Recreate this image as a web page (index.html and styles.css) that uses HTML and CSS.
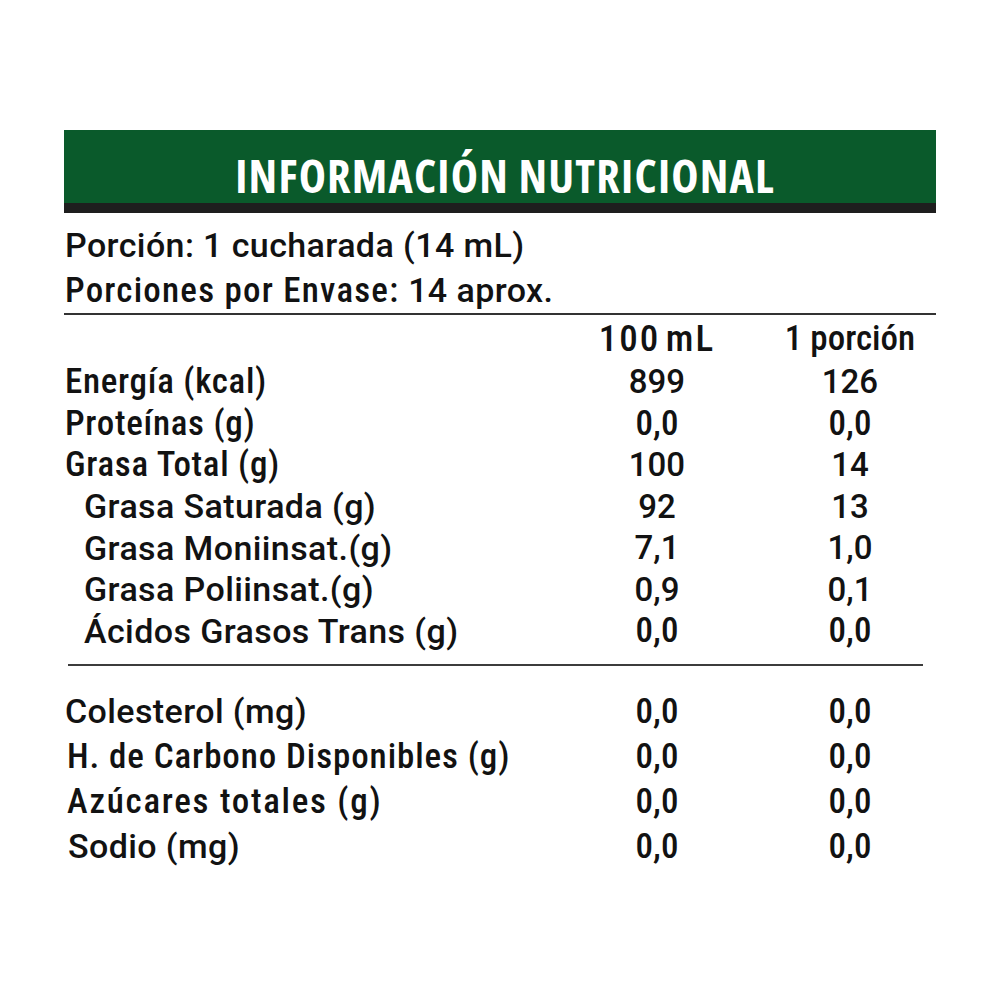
FILE: index.html
```html
<!DOCTYPE html>
<html lang="es">
<head>
<meta charset="utf-8">
<title>Información Nutricional</title>
<link rel="stylesheet" href="styles.css">
</head>
<body>
<div class="label">
  <header class="head"><h1 class="title">INFORMACIÓN NUTRICIONAL</h1></header>
  <div class="serving">
    <p class="sline">Porción: 1 cucharada (14 mL)</p>
    <p class="sline"><span class="cn">Porciones por Envase:</span> 14 aprox.</p>
  </div>
  <div class="grid main">
    <div class="row hdr"><span class="name"></span><span class="v cn spaced">100 mL</span><span class="v cn">1 porción</span></div>
    <div class="row"><span class="name cn">Energía (kcal)</span><span class="v">899</span><span class="v">126</span></div>
    <div class="row"><span class="name cn">Proteínas (g)</span><span class="v cn">0,0</span><span class="v cn">0,0</span></div>
    <div class="row"><span class="name cn">Grasa Total (g)</span><span class="v">100</span><span class="v">14</span></div>
    <div class="row sub"><span class="name">Grasa Saturada (g)</span><span class="v">92</span><span class="v">13</span></div>
    <div class="row sub"><span class="name">Grasa Moniinsat.(g)</span><span class="v">7,1</span><span class="v">1,0</span></div>
    <div class="row sub"><span class="name">Grasa Poliinsat.(g)</span><span class="v">0,9</span><span class="v">0,1</span></div>
    <div class="row sub"><span class="name">Ácidos Grasos Trans (g)</span><span class="v cn">0,0</span><span class="v cn">0,0</span></div>
  </div>
  <div class="rule2"></div>
  <div class="grid second">
    <div class="row"><span class="name">Colesterol (mg)</span><span class="v cn">0,0</span><span class="v cn">0,0</span></div>
    <div class="row"><span class="name cn carb">H. de Carbono Disponibles (g)</span><span class="v cn">0,0</span><span class="v cn">0,0</span></div>
    <div class="row"><span class="name cn wide">Azúcares totales (g)</span><span class="v cn">0,0</span><span class="v cn">0,0</span></div>
    <div class="row"><span class="name inset">Sodio (mg)</span><span class="v cn">0,0</span><span class="v cn">0,0</span></div>
  </div>
</div>
</body>
</html>
```

FILE: styles.css
```css
html, body {
  margin: 0;
  padding: 0;
  background: #ffffff;
}
body {
  font-family: Roboto, "Liberation Sans", sans-serif;
  color: #121212;
}
.label {
  width: 872px;
  margin: 130px 0 0 64px;
}
.head {
  height: 73px;
  background: #0a5a2b;
  border-bottom: 10px solid #1e1e1e;
  display: flex;
  align-items: center;
  justify-content: center;
}
.title {
  margin: 0;
  padding: 16px 0 0 10px;
  font-family: "Open Sans", sans-serif;
  font-weight: 700;
  font-size: 46px;
  font-stretch: 75%;
  color: #ffffff;
  letter-spacing: 1.2px;
}
.serving {
  padding: 10px 0 0 1px;
  border-bottom: 2px solid #333333;
}
.sline {
  margin: 0;
  font-size: 34px;
  line-height: 45px;
  font-weight: 500;
  letter-spacing: 0.4px;
  white-space: nowrap;
}
.sline .cn {
  font-size: 35px;
  font-stretch: 75%;
  letter-spacing: 1.2px;
}
.grid .row {
  display: grid;
  grid-template-columns: 486px 214px 172px;
  align-items: center;
  height: 41.5px;
  font-size: 34px;
  font-weight: 500;
  letter-spacing: 0.4px;
}
.grid .row.hdr {
  height: 46px;
}
.name {
  padding-left: 1px;
  white-space: nowrap;
}
.name.cn {
  font-size: 35px;
  font-stretch: 75%;
  letter-spacing: 0.7px;
}
.name.cn.carb {
  padding-left: 3px;
  letter-spacing: 0.9px;
}
.name.cn.wide {
  padding-left: 3px;
  letter-spacing: 1.7px;
}
.name.inset {
  padding-left: 4px;
}
.sub .name {
  padding-left: 20px;
}
.v {
  text-align: center;
  white-space: nowrap;
  font-size: 33px;
  letter-spacing: 0;
}
.v.cn {
  font-size: 35px;
  font-stretch: 75%;
}
.v.cn.spaced {
  font-size: 37px;
  letter-spacing: 2px;
  word-spacing: -5px;
}
.rule2 {
  margin: 12px 13px 0 4px;
  height: 2px;
  background: #3c3c3c;
}
.second {
  padding-top: 23px;
}
.second .row {
  height: 45px;
}
```
